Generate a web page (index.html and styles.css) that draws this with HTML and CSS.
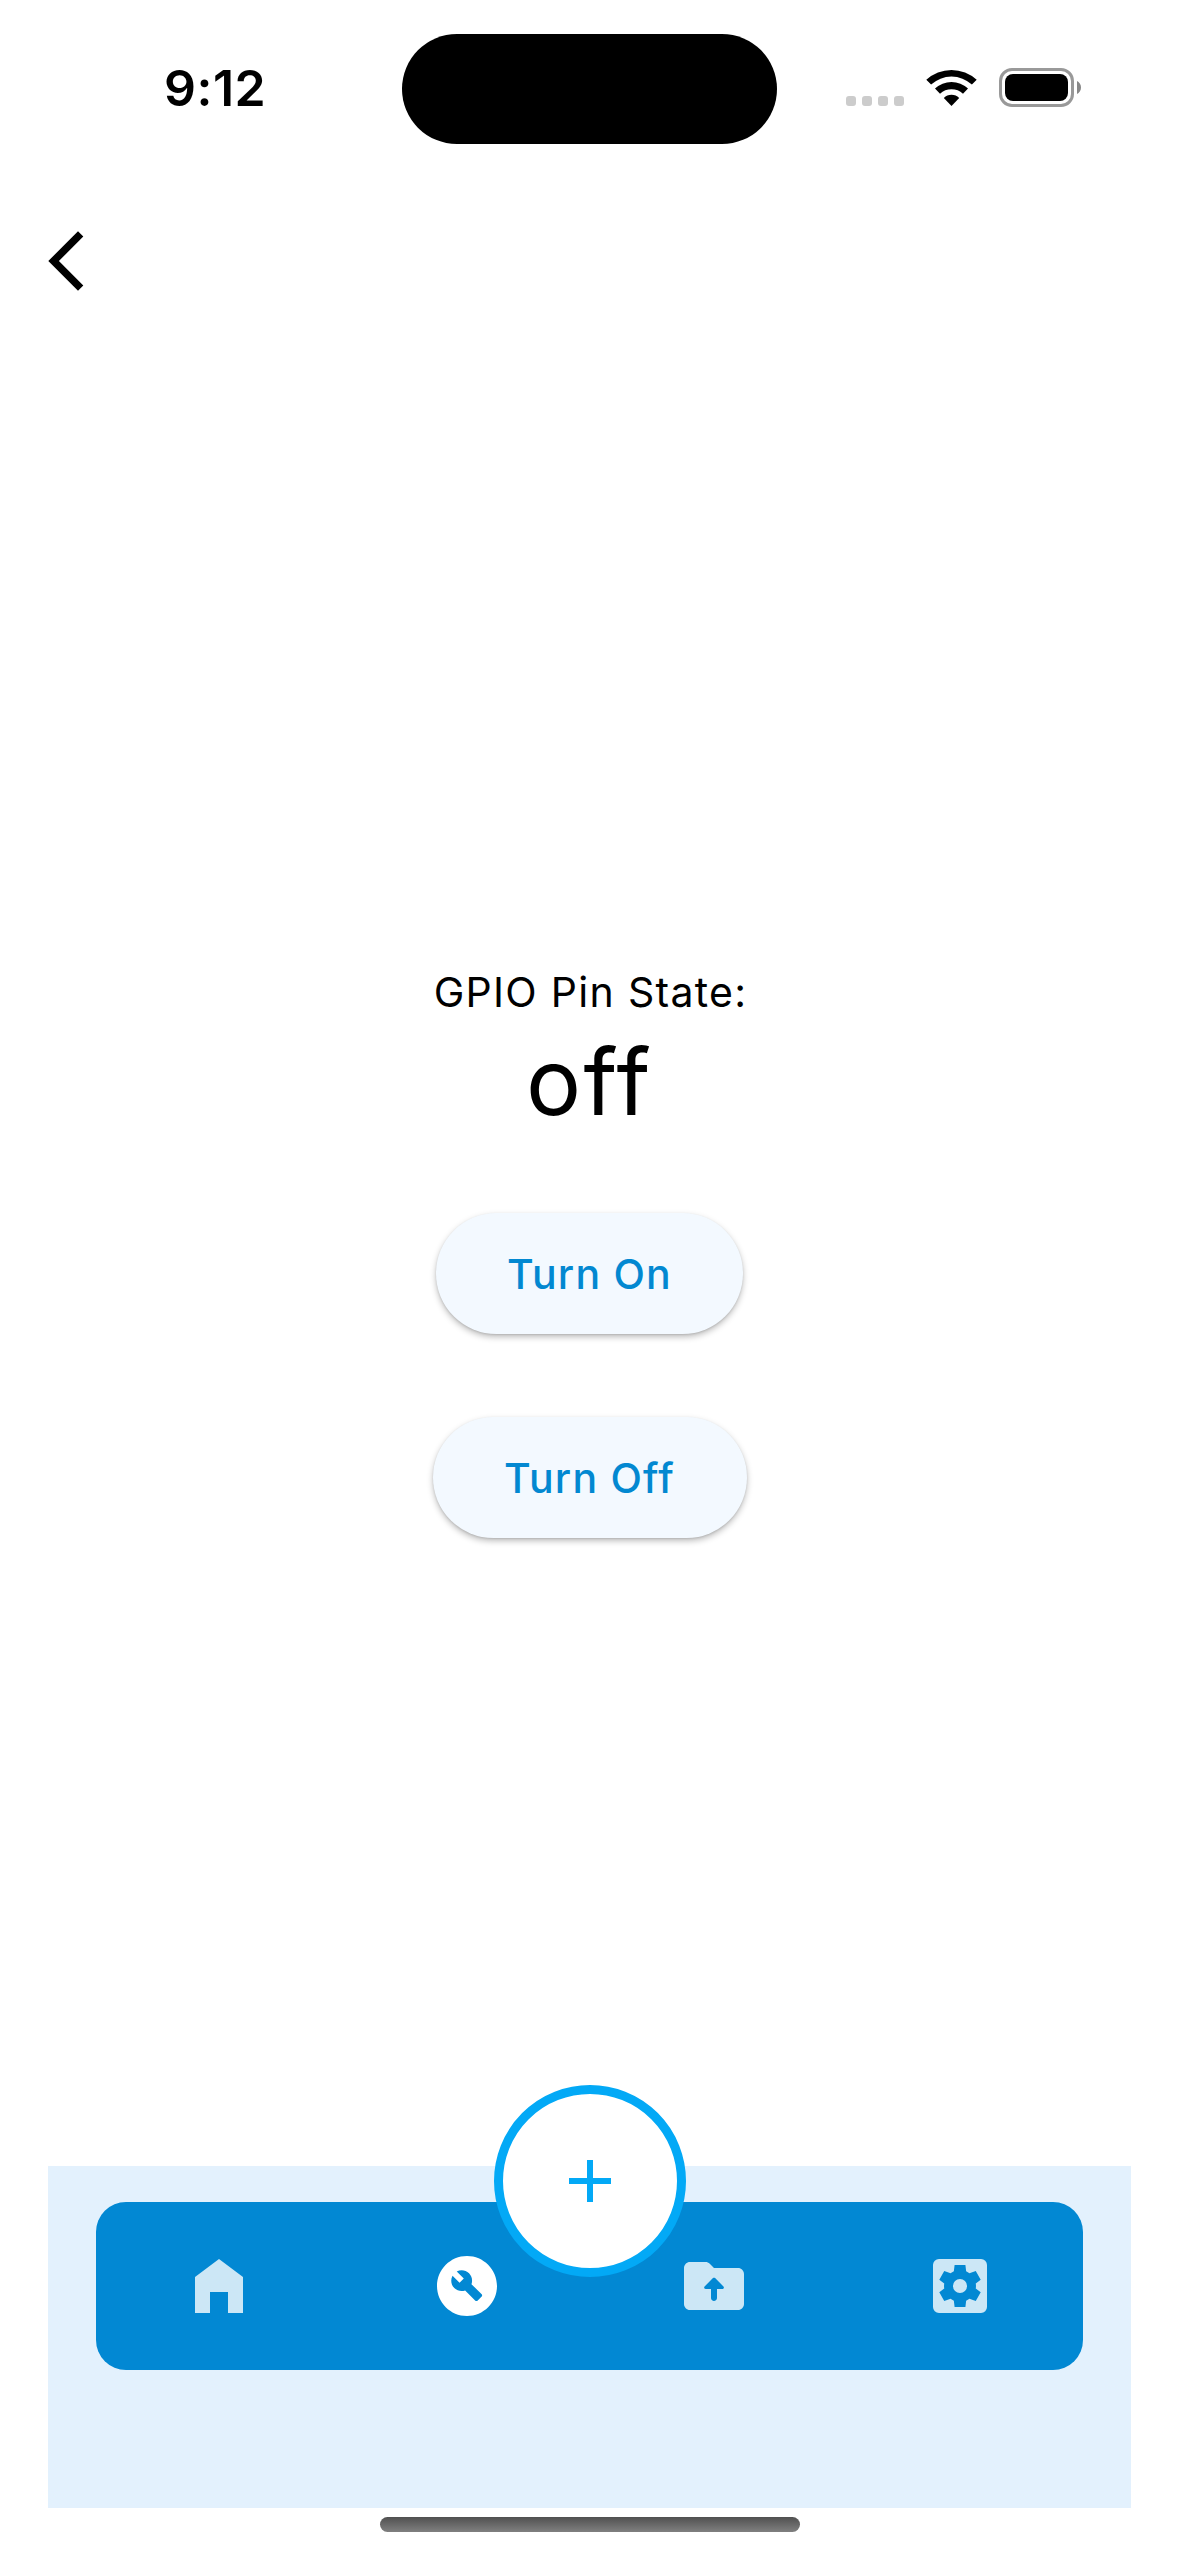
FILE: index.html
```html
<!DOCTYPE html>
<html lang="en">
<head>
<meta charset="utf-8">
<title>GPIO Pin</title>
<link rel="stylesheet" href="styles.css">
</head>
<body>
<div class="screen">
  <header class="status-bar">
    <span class="time">9:12</span>
    <div class="island"></div>
    <div class="indicators">
      <div class="signal"><i></i><i></i><i></i><i></i></div>
      <svg class="wifi" width="51" height="37" viewBox="0 0 51 37">
        <path d="M0.300 10.800A37 37 0 0 1 50.700 10.800L45.900 15.600A30 30 0 0 0 5.100 15.600Z"/>
        <path d="M9 19.600A24 24 0 0 1 42 19.600L37 24.800A17 17 0 0 0 14 24.800Z"/>
        <path d="M17.800 29A11 11 0 0 1 33.200 29L25.500 37Z"/>
      </svg>
      <div class="battery"><div class="level"></div></div>
      <svg class="nub" width="4" height="13" viewBox="0 0 4 13"><path d="M0 0C2.200 1 4 3.500 4 6.500C4 9.500 2.200 12 0 13Z"/></svg>
    </div>
  </header>

  <div class="app-bar">
    <button class="back" aria-label="Back">
      <svg width="36" height="60" viewBox="0 0 36 60"><path d="M0.300 30L30 0.300L35.300 5.600L10.900 30L35.300 54.400L30 59.700Z"/></svg>
    </button>
  </div>

  <main class="content">
    <p class="label">GPIO Pin State:</p>
    <p class="state">off</p>
    <button class="pill pill-on">Turn On</button>
    <button class="pill pill-off">Turn Off</button>
  </main>

  <footer class="dock">
    <nav class="nav">
      <svg class="dim" viewBox="0 0 24 24"><path d="M4 9L12 3L20 9V21H15V14H9V21H4Z"/></svg>
      <svg viewBox="0 0 24 24"><path d="M12 2C6.480 2 2 6.480 2 12s4.480 10 10 10 10-4.480 10-10S17.520 2 12 2zM16.900 15.490l-1.400 1.400c-.2.2-.51.2-.71 0l-3.410-3.410c-1.220.43-2.640.17-3.620-.81-1.110-1.110-1.300-2.790-.59-4.100l2.350 2.350 1.410-1.410-2.350-2.340c1.320-.71 2.990-.52 4.100.59.98.98 1.240 2.400.81 3.620l3.410 3.410c.2.19.2.51 0 .7z"/></svg>
      <svg class="dim" viewBox="0 0 24 24"><path d="M20 6h-8l-1.410-1.410C10.210 4.210 9.700 4 9.170 4H4c-1.100 0-2 .9-2 2v12c0 1.100.9 2 2 2h16c1.100 0 2-.9 2-2V8c0-1.100-.9-2-2-2zm-7 7v3c0 .55-.45 1-1 1s-1-.45-1-1v-3H9.210c-.45 0-.67-.54-.35-.85l2.800-2.790c.2-.19.51-.19.71 0l2.790 2.790c.3.31.08.85-.37.850H13z"/></svg>
      <svg class="dim" viewBox="0 0 24 24"><path fill-rule="evenodd" d="M5 3H19A2 2 0 0 1 21 5V19A2 2 0 0 1 19 21H5A2 2 0 0 1 3 19V5A2 2 0 0 1 5 3ZM10.200 5L9.950 7.100L8.850 7.750L6.750 7L5.100 9.900L6.750 11.200Q6.600 12 6.750 12.800L5.100 14.100L6.750 17L8.850 16.250L9.950 16.900L10.200 19H13.800L14.050 16.900L15.150 16.250L17.250 17L18.900 14.100L17.250 12.800Q17.400 12 17.250 11.200L18.900 9.900L17.250 7L15.150 7.750L14.050 7.100L13.800 5ZM12 9.650A2.350 2.350 0 0 1 12 14.350A2.350 2.350 0 0 1 12 9.650Z"/></svg>
    </nav>
    <button class="fab" aria-label="Add">
      <svg width="42" height="42" viewBox="0 0 42 42"><path d="M18 0H24V18H42V24H24V42H18V24H0V18H18Z"/></svg>
    </button>
  </footer>
  <div class="home-indicator"></div>
</div>
</body>
</html>
```
FILE: styles.css
```css
* { box-sizing: border-box; }
body {
  margin: 0;
  background: #fff;
  font-family: Inter, "Liberation Sans", sans-serif;
  color: #000;
}
button { border: 0; padding: 0; font-family: inherit; }
svg { display: block; }
.screen {
  width: 1179px;
  height: 2556px;
  display: flex;
  flex-direction: column;
  overflow: hidden;
}
.status-bar {
  height: 177px;
  display: grid;
  grid-template-columns: 402px 375px 402px;
  align-items: start;
}
.time {
  padding: 58px 0 0 164px;
  font-size: 50px;
  line-height: 60px;
  font-weight: 600;
  letter-spacing: 0.5px;
}
.island {
  margin-top: 33.500px;
  height: 110.500px;
  border-radius: 56px;
  background: #000;
}
.indicators {
  display: flex;
  padding: 68px 0 0 69px;
}
.signal {
  display: flex;
  gap: 6px;
  margin-top: 28px;
}
.signal i {
  width: 10px;
  height: 10px;
  border-radius: 3px;
  background: #ccc;
}
.wifi { margin: 1px 0 0 22px; }
.battery {
  margin-left: 22px;
  width: 75px;
  height: 39px;
  border: 3px solid #999;
  border-radius: 13px;
  padding: 3px;
}
.level {
  height: 27px;
  border-radius: 8px;
  background: #000;
}
.nub { margin: 13px 0 0 3px; fill: #888; }
.app-bar {
  height: 168px;
  padding: 54px 48px 0;
}
.back { background: none; display: block; }
.content {
  flex: 1;
  display: flex;
  flex-direction: column;
  align-items: center;
  padding-top: 617px;
}
.label, .state { margin: 0; }
.label {
  font-size: 41px;
  line-height: 60px;
  letter-spacing: 1.300px;
  padding-left: 2px;
}
.state {
  font-size: 92px;
  line-height: 120px;
  letter-spacing: 2.500px;
}
.pill {
  height: 121px;
  border-radius: 61px;
  background: #f3f9ff;
  color: #0288d1;
  font-size: 41px;
  line-height: 122px;
  font-weight: 500;
  letter-spacing: 1.200px;
  box-shadow: 0 3px 6px rgba(0, 0, 0, .26), 0 1px 2px rgba(0, 0, 0, .1);
}
.pill-on { width: 307px; margin-top: 71px; }
.pill-off { width: 314px; margin-top: 83px; }
.dock {
  position: relative;
  height: 342px;
  margin: 0 48px;
  padding: 36px 48px 0;
  background: #e3f1fd;
}
.nav {
  height: 168px;
  padding-left: 87px;
  display: grid;
  grid-template-columns: 248px 247px 246px 72px;
  align-items: center;
  border-radius: 30px;
  background: #0288d3;
}
.nav svg { width: 72px; height: 72px; fill: #fff; }
.nav .dim { fill: #cce7f6; }
.fab {
  position: absolute;
  left: 445.500px;
  top: -81px;
  width: 192px;
  height: 192px;
  border: 9px solid #03a9f6;
  border-radius: 50%;
  background: #fff;
  display: flex;
  align-items: center;
  justify-content: center;
}
.fab svg { fill: #03a9f6; }
.home-indicator {
  width: 420px;
  height: 15px;
  margin: 9px auto 24px 380px;
  border-radius: 8px;
  background: linear-gradient(#505050, #808080);
}
```
